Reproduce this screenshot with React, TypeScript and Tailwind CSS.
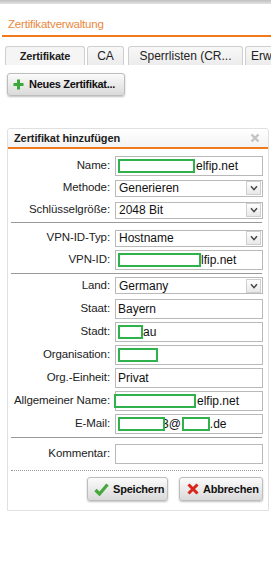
import React from "react";

const Green = ({ w, className = "" }: { w: string; className?: string }) => (
  <span
    className={`relative z-10 inline-block h-[14px] shrink-0 border-2 border-[#2fb24c] bg-white ${w} ${className}`}
  />
);

const Row = ({
  label,
  children,
  tall,
}: {
  label: string;
  children: React.ReactNode;
  tall?: boolean;
}) => (
  <div className={`flex items-center ${tall ? "h-[23px]" : "h-[22px]"}`}>
    <div className="w-[102px] whitespace-nowrap text-right text-[11.5px] tracking-[-0.1px] text-[#222]">
      {label}
    </div>
    <div className="ml-[5px] w-[148px]">{children}</div>
  </div>
);

const Input = ({ children }: { children?: React.ReactNode }) => (
  <div className="flex h-[20px] items-center overflow-hidden whitespace-nowrap border border-[#b9b9b9] bg-white px-[2px] text-[12px] text-[#111]">
    {children}
  </div>
);

const Select = ({ value }: { value: string }) => (
  <div className="flex h-[17px] items-center border border-[#b9b9b9] bg-white pl-[3px] pr-[1px] text-[12px] text-[#111]">
    <span className="flex-1">{value}</span>
    <span className="flex h-[14px] w-[15px] items-center justify-center border border-[#cfcfcf] bg-gradient-to-b from-white to-[#e8e8e8]">
      <svg width="8" height="6" viewBox="0 0 8 6">
        <path d="M1 1.2 L4 4.6 L7 1.2" fill="none" stroke="#444" strokeWidth="1.4" />
      </svg>
    </span>
  </div>
);

const Sep = ({ className = "" }: { className?: string }) => (
  <div className={`ml-[3px] mr-[6px] border-t border-[#9a9a9a] ${className}`} />
);

const App = () => {
  return (
    <div className="h-[575px] w-[271px] overflow-hidden bg-white font-['Liberation_Sans',Arial,sans-serif]">
      <div className="h-[4px] bg-gradient-to-b from-[#bfbfbf] to-[#e4e4e4]" />
      <div className="flex h-[31px] items-center pl-[8px] pt-[11px] text-[11.5px] tracking-[-0.2px] text-[#e8883c]">
        Zertifikatverwaltung
      </div>
      <div className="ml-[2px] h-[2px] bg-[#f07a1c]" />

      {/* tabs */}
      <div className="mt-[9px] flex h-[19px] whitespace-nowrap pl-[5px] text-[12px] text-[#222]">
        <div className="flex w-[80px] shrink-0 items-center justify-center rounded-t-[3px] border border-b-0 border-[#cfcfcf] bg-[#f5f5f5] text-[11px] font-bold tracking-[-0.2px]">
          Zertifikate
        </div>
        <div className="ml-[2px] flex w-[37px] shrink-0 items-center justify-center rounded-t-[3px] border border-b-0 border-[#cfcfcf] bg-gradient-to-b from-[#f8f8f8] to-[#ececec]">
          CA
        </div>
        <div className="ml-[4px] flex w-[115px] shrink-0 items-center justify-center rounded-t-[3px] border border-b-0 border-[#cfcfcf] bg-gradient-to-b from-[#f8f8f8] to-[#ececec]">
          Sperrlisten (CR...
        </div>
        <div className="ml-[2px] flex w-[60px] shrink-0 items-center overflow-hidden rounded-t-[3px] border border-b-0 border-[#cfcfcf] bg-gradient-to-b from-[#f8f8f8] to-[#ececec] pl-[5px]">
          Erw
        </div>
      </div>

      {/* new certificate button */}
      <div className="ml-[7px] mt-[8px] flex h-[23px] w-[118px] items-center whitespace-nowrap rounded-[3px] border border-[#bdbdbd] bg-gradient-to-b from-[#fbfbfb] to-[#dadada] pl-[5px] text-[11px] font-bold tracking-[-0.3px] text-[#111] shadow-[0_1px_2px_rgba(0,0,0,0.25)]">
        <svg width="11" height="11" viewBox="0 0 11 11" className="mr-[5px] shrink-0">
          <path d="M5.5 0.5 V10.5 M0.5 5.5 H10.5" stroke="#3aa83a" strokeWidth="3" />
        </svg>
        Neues Zertifikat...
      </div>

      {/* panel */}
      <div className="ml-[7px] mr-[2px] mt-[32px] rounded-t-[3px] border border-[#e0e0e0]">
        <div className="flex h-[20px] items-center justify-between rounded-t-[3px] border-b-2 border-[#f07a1c] bg-gradient-to-b from-white to-[#f3f3f3] pl-[6px] pr-[8px] text-[11px] font-bold tracking-[-0.1px] text-[#222]">
          Zertifikat hinzufügen
          <svg width="10" height="10" viewBox="0 0 10 10">
            <path d="M1.5 1.5 L8.5 8.5 M8.5 1.5 L1.5 8.5" stroke="#c4c4c4" strokeWidth="2.4" />
          </svg>
        </div>

        <div className="pt-[6px] pb-[9px]">
          <Row label="Name:">
            <Input>
              <Green w="w-[77px]" />
              <span className="ml-[1px]">elfip.net</span>
            </Input>
          </Row>
          <Row label="Methode:">
            <Select value="Generieren" />
          </Row>
          <Row label="Schlüsselgröße:">
            <Select value="2048 Bit" />
          </Row>
          <Sep className="mt-[1px]" />

          <div className="mt-[4px]">
            <Row label="VPN-ID-Typ:">
              <Select value="Hostname" />
            </Row>
            <Row label="VPN-ID:">
              <Input>
                <Green w="w-[83px]" />
                <span>lfip.net</span>
              </Input>
            </Row>
          </div>
          <Sep className="mt-[2px]" />

          <Row label="Land:" tall>
            <Select value="Germany" />
          </Row>
          <Row label="Staat:" tall>
            <Input>Bayern</Input>
          </Row>
          <Row label="Stadt:" tall>
            <Input>
              <Green w="w-[25px]" />
              <span>au</span>
            </Input>
          </Row>
          <Row label="Organisation:" tall>
            <Input>
              <Green w="w-[40px]" />
            </Input>
          </Row>
          <Row label="Org.-Einheit:" tall>
            <Input>Privat</Input>
          </Row>
          <Row label="Allgemeiner Name:" tall>
            <div className="flex h-[20px] items-center whitespace-nowrap border border-[#b9b9b9] bg-white pr-[2px] text-[12px] text-[#111]">
              <Green w="w-[82px]" className="-ml-[2px]" />
              <span className="ml-[1px]">elfip.net</span>
            </div>
          </Row>
          <Row label="E-Mail:" tall>
            <Input>
              <Green w="w-[47px]" />
              <span className="-ml-[3px]">3@</span>
              <Green w="w-[28px]" className="ml-[1px]" />
              <span>.de</span>
            </Input>
          </Row>
          <Sep className="mt-[2px]" />

          <div className="mt-[5px]">
            <Row label="Kommentar:">
              <Input />
            </Row>
          </div>
          <div className="ml-[3px] mr-[5px] mt-[5px] border-t border-dotted border-[#9a9a9a]" />

          <div className="mr-[5px] mt-[6px] flex justify-end gap-[11px] whitespace-nowrap text-[11px] font-bold tracking-[-0.2px] text-[#111]">
            <div className="flex h-[24px] w-[81px] items-center rounded-[3px] border border-[#bdbdbd] bg-gradient-to-b from-[#fbfbfb] to-[#dadada] pl-[6px] shadow-[0_1px_2px_rgba(0,0,0,0.25)]">
              <svg width="15" height="13" viewBox="0 0 15 13" className="mr-[4px] shrink-0">
                <path d="M1.5 7 L5.5 11 L13.5 1.5" fill="none" stroke="#46a83c" strokeWidth="3.2" />
              </svg>
              Speichern
            </div>
            <div className="flex h-[24px] w-[84px] items-center rounded-[3px] border border-[#bdbdbd] bg-gradient-to-b from-[#fbfbfb] to-[#dadada] pl-[7px] shadow-[0_1px_2px_rgba(0,0,0,0.25)]">
              <svg width="12" height="12" viewBox="0 0 12 12" className="mr-[4px] shrink-0">
                <path d="M1.5 1.5 L10.5 10.5 M10.5 1.5 L1.5 10.5" stroke="#d9261c" strokeWidth="3" />
              </svg>
              Abbrechen
            </div>
          </div>
        </div>
      </div>
    </div>
  );
};

export default App;
